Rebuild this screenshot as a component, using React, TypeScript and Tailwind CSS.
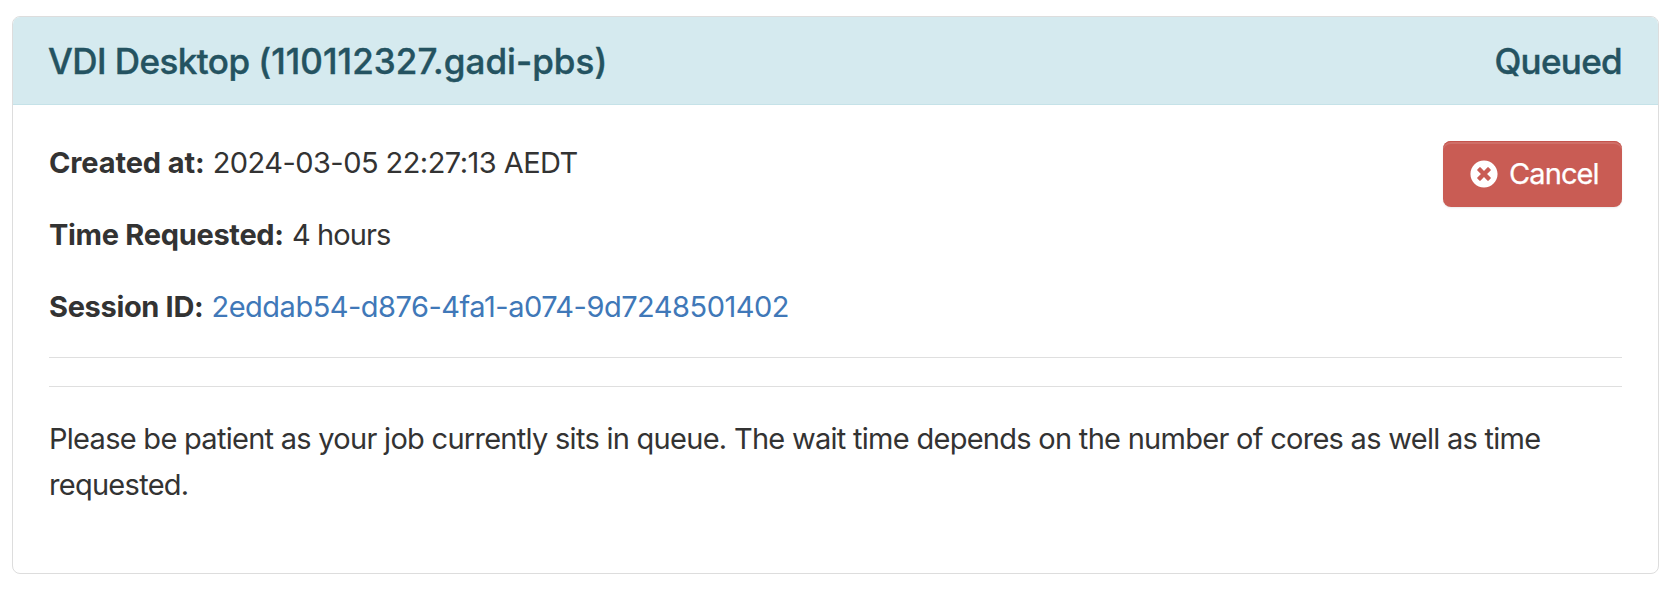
import React from "react";
import { FaTimesCircle } from "react-icons/fa";

export default function App() {
  return (
    <div className="h-[590px] w-[1678px] bg-white pt-4 pl-3 font-['Inter',sans-serif] text-[29px] text-[#333333]">
      <section className="h-[558px] w-[1647px] overflow-hidden rounded-lg border border-[#dddddd]">
        <header className="flex h-[88px] items-center justify-between border-b border-[#c5e2e8] bg-[#d5eaef] pr-9 pl-[35px] pt-0.5 text-[35px] font-medium text-[#245361] [-webkit-text-stroke:0.4px_#245361]">
          <h3>
            <span className="tracking-[-0.55px]">VDI Desktop </span>
            <span className="tracking-[0.05px]">(110112327.gadi-pbs)</span>
          </h3>
          <span className="tracking-[-0.7px]">Queued</span>
        </header>
        <div className="px-9 pt-9">
          <div className="flex h-[216px] items-start justify-between">
            <div className="flex flex-col gap-[29px] leading-[43px] whitespace-nowrap">
              <p>
                <strong className="font-bold tracking-[-0.12px]">Created at:</strong>{" "}
                <span className="tracking-[-0.55px]">2024-03-05 22:27:13 AEDT</span>
              </p>
              <p>
                <strong className="font-bold tracking-[-0.3px]">Time Requested:</strong>{" "}
                <span className="tracking-[-0.9px]">4 hours</span>
              </p>
              <p>
                <strong className="font-bold tracking-[-0.34px]">Session ID:</strong>{" "}
                <a className="tracking-[-0.5px] text-[#4078b8]">2eddab54-d876-4fa1-a074-9d7248501402</a>
              </p>
            </div>
            <button className="flex h-[66px] w-[179px] items-center gap-[11px] rounded-lg bg-[#c95c54] pb-px pl-[27px] text-white shadow-[inset_0_1px_0_#c4534c,inset_0_3px_0_rgba(255,255,255,0.12),0_1px_2px_rgba(0,0,0,0.08)]">
              <FaTimesCircle className="size-7 shrink-0" />
              <span className="tracking-[-0.9px] [-webkit-text-stroke:0.25px_#ffffff]">Cancel</span>
            </button>
          </div>
          <hr className="border-t border-[#dfdfdf]" />
          <hr className="mt-7 border-t border-[#dfdfdf]" />
          <p className="mt-[29px] leading-[46px] tracking-[-0.72px]">
            Please be patient as your job currently sits in queue. The wait time depends on the number of cores as well as time requested.
          </p>
        </div>
      </section>
    </div>
  );
}
